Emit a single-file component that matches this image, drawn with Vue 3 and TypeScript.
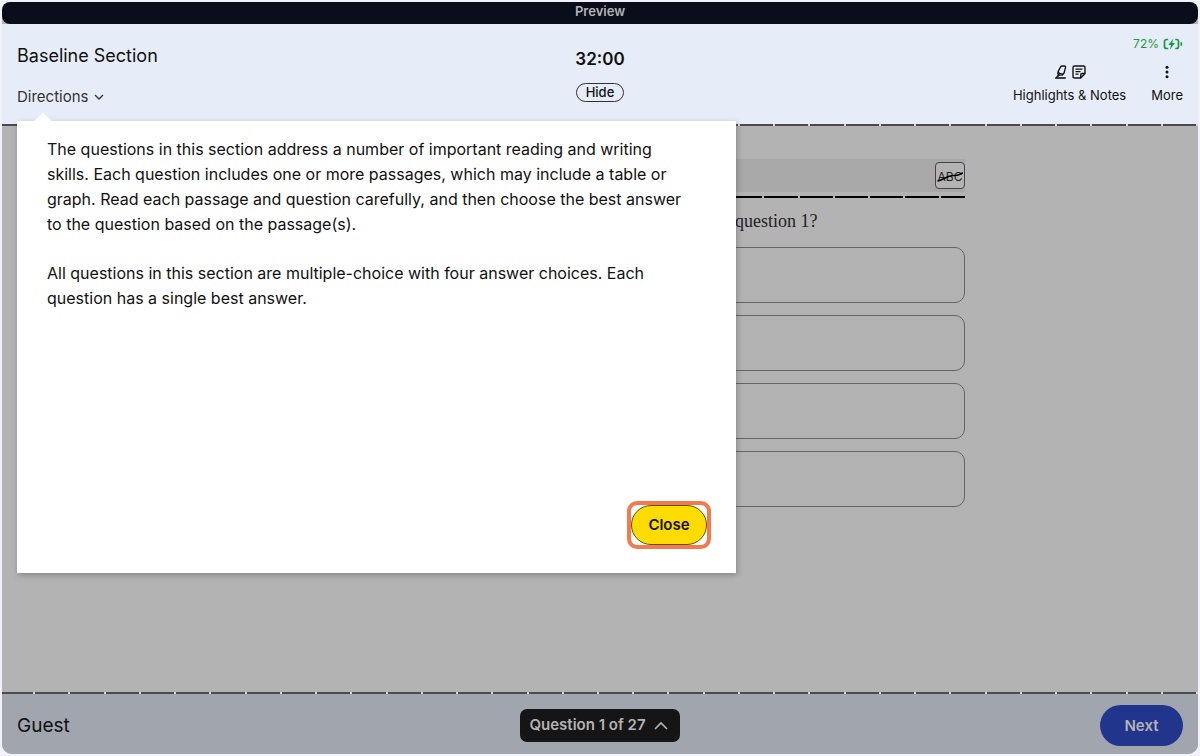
<script setup lang="ts">
import { ref } from 'vue'

const segments = 34
const columnSegments = 21
const choices = ['A', 'B', 'C', 'D']
const paragraphs = [
  'The questions in this section address a number of important reading and writing skills. Each question includes one or more passages, which may include a table or graph. Read each passage and question carefully, and then choose the best answer to the question based on the passage(s).',
  'All questions in this section are multiple-choice with four answer choices. Each question has a single best answer.',
]

const directionsOpen = ref(true)
const timerVisible = ref(true)
</script>

<template>
  <div class="window">
    <div class="titlebar">Preview</div>

    <header class="header">
      <div class="header-left">
        <h1 class="title">Baseline Section</h1>
        <button class="directions" type="button" :aria-expanded="directionsOpen" @click="directionsOpen = !directionsOpen">
          Directions
          <svg width="10" height="6" viewBox="0 0 10 6" fill="none" stroke="currentColor" stroke-width="1.3" aria-hidden="true">
            <path d="M1 1l4 4 4-4" />
          </svg>
        </button>
      </div>

      <div class="header-center">
        <div class="timer"><span v-if="timerVisible">32:00</span></div>
        <button class="hide" type="button" @click="timerVisible = !timerVisible">Hide</button>
      </div>

      <div class="header-right">
        <div class="battery">
          <span>72%</span>
          <svg width="20" height="12" viewBox="0 0 20 12" fill="none" stroke="currentColor" stroke-width="1.7" aria-hidden="true">
            <path d="M5.2 1.5H3.5a2 2 0 0 0-2 2v5a2 2 0 0 0 2 2h1.7M12.3 1.5h1.2a2 2 0 0 1 2 2v5a2 2 0 0 1-2 2h-1.2" />
            <path d="M10.3 .6L5.4 6.9h2.7L7 11.6l5-6.5H9.2z" fill="currentColor" stroke="none" />
            <path d="M18.3 4.2v3.6" stroke-width="1.6" />
          </svg>
        </div>
        <div class="tools">
          <button class="tool" type="button">
            <span class="tool-icons">
              <svg width="14" height="14" viewBox="0 0 14 14" fill="none" stroke="currentColor" stroke-width="1.3" stroke-linejoin="round" aria-hidden="true">
                <path d="M4.2 6.4L6.6 1.9Q7 1 8 1h2.4q1.4.1 1.1 1.5L10 8.2 8.3 10.2 5.2 9.9 3.8 8.6z" />
                <path d="M4.2 6.4l1 1.9 3.1.9L10 8.2M4 9.2v1.5L2.2 12.6M5.4 10L4 11.4" />
                <path d="M1.2 13h10.6" stroke-width="1.6" />
              </svg>
              <svg width="14" height="14" viewBox="0 0 14 14" fill="none" stroke="currentColor" stroke-width="1.4" stroke-linejoin="round" aria-hidden="true">
                <path d="M2.5 1h9Q13 1 13 2.5v6L8.7 13H2.5Q1 13 1 11.5v-9Q1 1 2.5 1z" />
                <path d="M8.7 13V10q0-1.5 1.5-1.5H13" />
                <path d="M3.5 4.2h7M3.5 6.7h5M3.5 9.2h3" stroke-width="1.2" />
              </svg>
            </span>
            Highlights &amp; Notes
          </button>
          <button class="tool" type="button">
            <span class="tool-icons">
              <svg width="4" height="14" viewBox="0 0 4 14" fill="currentColor" aria-hidden="true">
                <circle cx="2" cy="2.2" r="1.5" /><circle cx="2" cy="7" r="1.5" /><circle cx="2" cy="11.8" r="1.5" />
              </svg>
            </span>
            More
          </button>
        </div>
      </div>
    </header>

    <div class="dashes"><span v-for="n in segments" :key="n" /></div>

    <main class="content">
      <div class="column">
        <div class="toolbar">
          <button class="eliminate" type="button" aria-label="Answer eliminator">
            <svg width="28" height="26" viewBox="0 0 28 26" aria-hidden="true">
              <text x="14" y="18" text-anchor="middle" class="abc">ABC</text>
              <path d="M1.5 18C8 17 11 12 18 12.5S24 10 27 10" fill="none" stroke="#000" stroke-width="1.6" />
            </svg>
          </button>
        </div>
        <div class="dashes column-dashes"><span v-for="n in columnSegments" :key="n" /></div>
        <p class="prompt">question 1?</p>
        <div class="choices">
          <button v-for="choice in choices" :key="choice" class="choice" type="button" :aria-label="choice" />
        </div>
      </div>
    </main>

    <div class="dashes"><span v-for="n in segments" :key="n" /></div>

    <footer class="footer">
      <div class="guest">Guest</div>
      <button class="question-nav" type="button">
        Question 1 of 27
        <svg width="14" height="9" viewBox="0 0 14 9" fill="none" stroke="currentColor" stroke-width="1.6" aria-hidden="true">
          <path d="M1 8l6-6 6 6" />
        </svg>
      </button>
      <div class="footer-right">
        <button class="next" type="button">Next</button>
      </div>
    </footer>

    <section v-if="directionsOpen" class="popover" role="dialog" aria-label="Directions">
      <div>
        <p v-for="text in paragraphs" :key="text">{{ text }}</p>
      </div>
      <div class="popover-actions">
        <div class="focus-ring">
          <button class="close" type="button" @click="directionsOpen = false">Close</button>
        </div>
      </div>
    </section>
  </div>
</template>

<style>
body {
  margin: 0;
  padding: 2px;
  background: #f2f3fa;
}
</style>

<style scoped>
* {
  box-sizing: border-box;
}
.window {
  position: relative;
  display: flex;
  flex-direction: column;
  min-height: calc(100vh - 4px);
  border-radius: 10px;
  background: #b3b3b3;
  color: #111;
  font-family: Inter, 'Liberation Sans', sans-serif;
}
button {
  margin: 0;
  padding: 0;
  border: 0;
  background: none;
  color: inherit;
  font: inherit;
  cursor: pointer;
}
h1,
p {
  margin: 0;
}
.titlebar {
  height: 22px;
  border-radius: 8px;
  background: #0a0e1a;
  color: #b4b4b6;
  font-size: 13px;
  font-weight: 600;
  line-height: 19px;
  text-align: center;
}
.header {
  display: grid;
  grid-template-columns: 1fr auto 1fr;
  height: 100px;
  padding: 0 15px;
  background: #e6edf8;
}
.header-left {
  display: flex;
  flex-direction: column;
  align-items: flex-start;
  gap: 19px;
  padding-top: 20px;
}
.title {
  font-size: 18px;
  font-weight: 400;
  line-height: 24px;
}
.directions {
  display: flex;
  align-items: center;
  gap: 6px;
  color: #333;
  font-size: 15px;
  line-height: 20px;
}
.header-center {
  display: flex;
  flex-direction: column;
  align-items: center;
  gap: 13px;
  padding-top: 24px;
}
.timer {
  height: 22px;
  font-size: 17px;
  font-weight: 600;
  line-height: 22px;
}
.hide {
  width: 48px;
  height: 19px;
  border: 1px solid #333;
  border-radius: 10px;
  font-size: 13px;
  font-weight: 500;
  line-height: 15px;
}
.header-right {
  display: flex;
  flex-direction: column;
  align-items: flex-end;
  gap: 13px;
  padding-top: 12px;
}
.battery {
  display: flex;
  align-items: center;
  gap: 4px;
  color: #169c3c;
  font-size: 12px;
  line-height: 16px;
}
.tools {
  display: flex;
  gap: 25px;
}
.tool {
  display: flex;
  flex-direction: column;
  align-items: center;
  gap: 8px;
  font-size: 13px;
  line-height: 16px;
}
.tool-icons {
  display: flex;
  gap: 4px;
}
.dashes {
  display: flex;
  flex: none;
  height: 2px;
  overflow: hidden;
  background: #c8cacd;
}
.dashes span {
  flex: 1;
  border-right: 2px solid #d4d6da;
  background: #4b4b4d;
  background-clip: padding-box;
}
.dashes:not(.column-dashes) span:first-child {
  margin-left: -2px;
}
.content {
  flex: 1;
  padding: 33px 15px 0;
}
.column {
  width: 100%;
  max-width: 730px;
  margin: 0 auto;
}
.toolbar {
  display: flex;
  align-items: center;
  justify-content: flex-end;
  height: 33px;
  background: #a8a8a8;
}
.eliminate {
  display: grid;
  place-items: center;
  width: 30px;
  height: 27px;
  border: 1px solid #444;
  border-radius: 4px;
  background: #b3b3b3;
}
.abc {
  fill: #222;
  font-size: 12px;
}
.column-dashes {
  margin-top: 4px;
}
.column-dashes span {
  flex: 0 0 calc(100% * 35 / 724);
  border-right-color: #b3b3b3;
  background-color: #000;
}
.prompt {
  padding: 11px 0 14px 500px;
  color: #222;
  font-family: 'Liberation Serif', serif;
  font-size: 18px;
  line-height: 24px;
}
.choices {
  display: flex;
  flex-direction: column;
  gap: 12px;
}
.choice {
  height: 56px;
  border: 1px solid #666;
  border-radius: 10px;
}
.footer {
  display: grid;
  grid-template-columns: 1fr auto 1fr;
  align-items: center;
  height: 60px;
  padding: 2px 15px 0;
  border-radius: 0 0 10px 10px;
  background: #a1a5ad;
}
.guest {
  font-size: 19px;
}
.question-nav {
  display: flex;
  align-items: center;
  gap: 8px;
  height: 33px;
  padding: 0 12px 0 9px;
  border-radius: 7px;
  background: #151515;
  color: #b3b3b3;
  font-size: 15px;
  font-weight: 600;
  line-height: 20px;
}
.footer-right {
  display: flex;
  justify-content: flex-end;
}
.next {
  width: 83px;
  height: 41px;
  border-radius: 21px;
  background: #22358c;
  color: #b3b3b3;
  font-size: 15px;
  font-weight: 600;
}
.popover {
  position: absolute;
  top: 119px;
  left: 15px;
  display: flex;
  flex-direction: column;
  justify-content: space-between;
  width: 61%;
  max-width: 719px;
  min-height: 452px;
  padding: 16px 25px 24px 30px;
  background: #fff;
  box-shadow: 1px 2px 6px rgba(0, 0, 0, 0.25);
}
.popover::before {
  content: '';
  position: absolute;
  top: -8px;
  left: 17px;
  border: solid transparent;
  border-width: 0 9px 8px;
  border-bottom-color: #fff;
}
.popover p {
  max-width: 645px;
  font-size: 16px;
  line-height: 25px;
}
.popover p + p {
  margin-top: 24px;
}
.popover-actions {
  display: flex;
  justify-content: flex-end;
}
.focus-ring {
  border: 4px solid #f37a4d;
  border-radius: 10px;
}
.close {
  display: block;
  width: 76px;
  height: 40px;
  padding-bottom: 2px;
  border: 1px solid #5c5010;
  border-radius: 20px;
  background: #ffdc00;
  font-size: 15px;
  font-weight: 600;
}
</style>
